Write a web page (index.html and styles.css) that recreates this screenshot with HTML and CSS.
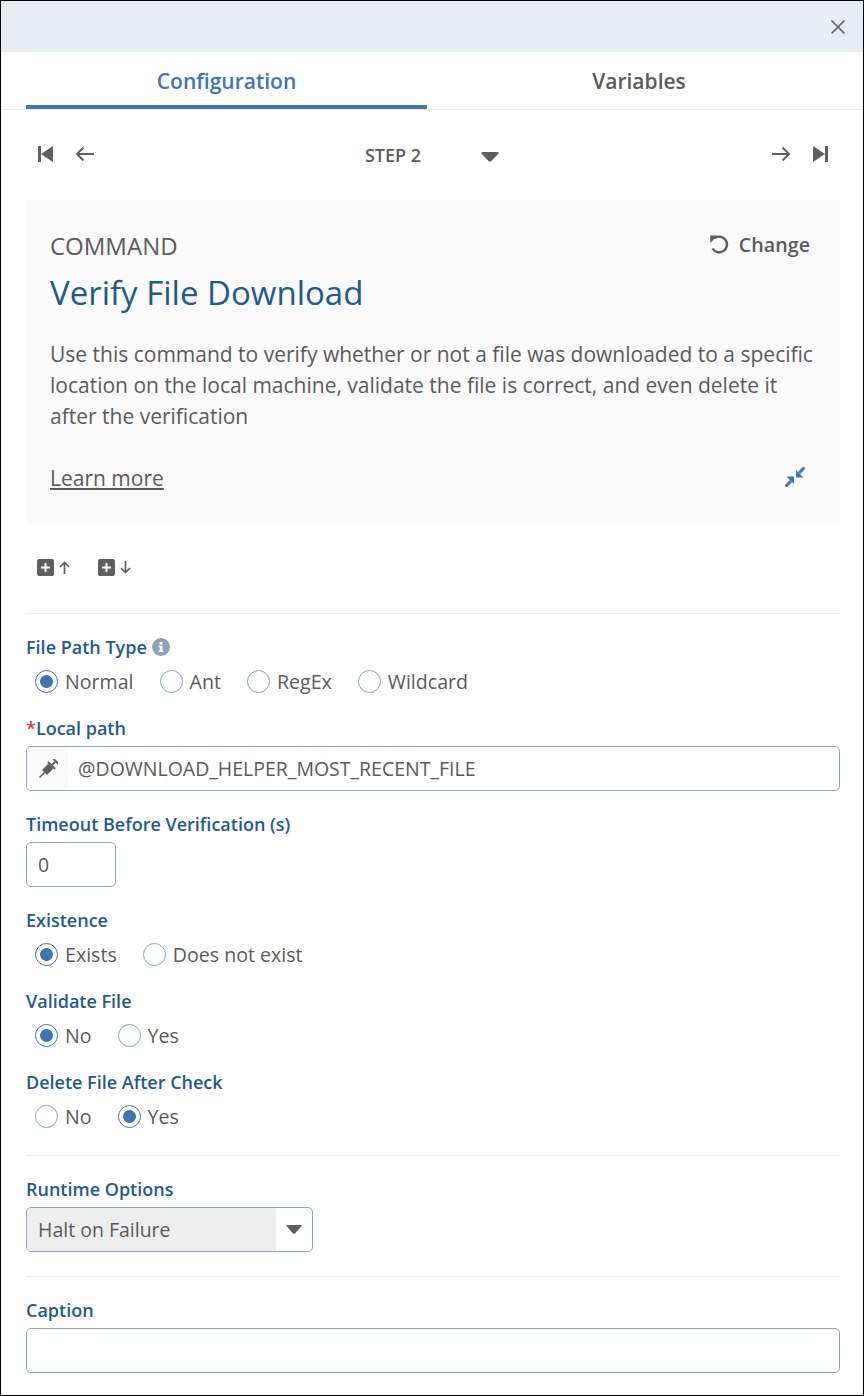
FILE: index.html
```html
<!DOCTYPE html>
<html lang="en">
<head>
  <meta charset="UTF-8" />
  <meta name="viewport" content="width=device-width, initial-scale=1.0" />
  <title>Verify File Download</title>
  <link rel="stylesheet" href="styles.css">
</head>
<body>
  <div class="panel">
    <div class="top-bar">
      <svg class="close-icon" width="16" height="16" viewBox="0 0 16 16"><path d="M1.5 1.5L14.5 14.5M14.5 1.5L1.5 14.5" /></svg>
    </div>

    <div class="tabs">
      <div class="tab active">Configuration</div>
      <div class="tab">Variables</div>
    </div>

    <div class="step-nav">
      <div class="step-group">
        <svg width="15" height="16" viewBox="0 0 15 16"><path class="fill" d="M0 0H3V16H0ZM15 0V16L3 8Z" /></svg>
        <svg class="arrow" width="19" height="16" viewBox="0 0 19 16"><path d="M19 8H2M8.500 1.500L2 8L8.500 14.500" /></svg>
      </div>
      <div class="step-select">
        <span>STEP 2</span>
        <svg class="step-caret" width="18" height="10" viewBox="0 0 18 10"><path class="fill" d="M1.500 0H16.500Q18 0 17.500 1.500L10.500 9Q9 10 7.500 9L.5 1.500Q0 0 1.500 0Z" /></svg>
      </div>
      <div class="step-group">
        <svg class="arrow" width="19" height="16" viewBox="0 0 19 16"><path d="M0 8H17M10.500 1.500L17 8L10.500 14.500" /></svg>
        <svg width="15" height="16" viewBox="0 0 15 16"><path class="fill" d="M15 0H12V16H15ZM0 0V16L12 8Z" /></svg>
      </div>
    </div>

    <div class="command-card">
      <div class="card-head">
        <span class="card-kicker">COMMAND</span>
        <span class="change-link">
          <svg width="20" height="20" viewBox="0 0 20 20"><path class="line" d="M5.500 4.200A7.800 7.800 0 1 1 3.500 14.500" /><path class="fill" d="M1 1.500L8.500 1.500L1.500 9Z" /></svg>
          Change
        </span>
      </div>
      <h1>Verify File Download</h1>
      <p>Use this command to verify whether or not a file was downloaded to a specific location on the local machine, validate the file is correct, and even delete it after the verification</p>
      <div class="card-foot">
        <a class="learn-more">Learn more</a>
        <svg class="collapse" width="20" height="20" viewBox="0 0 20 20"><path d="M19.500 .500L14 6M.5 19.500L6 14" /><path class="solid" d="M11 3V10.500H18.500ZM9 17V9.500H1.500Z" /></svg>
      </div>
    </div>

    <div class="insert-row">
      <span class="insert-btn">
        <svg width="17" height="17" viewBox="0 0 17 17"><rect class="fill" width="17" height="17" rx="2" /><path class="plus" d="M8.500 4V13M4 8.500H13" /></svg>
        <svg class="small-arrow" width="11" height="13" viewBox="0 0 11 13"><path d="M5.500 13V1.500M1 6L5.500 1.500L10 6" /></svg>
      </span>
      <span class="insert-btn">
        <svg width="17" height="17" viewBox="0 0 17 17"><rect class="fill" width="17" height="17" rx="2" /><path class="plus" d="M8.500 4V13M4 8.500H13" /></svg>
        <svg class="small-arrow" width="11" height="13" viewBox="0 0 11 13"><path d="M5.500 0V11.500M1 7L5.500 11.500L10 7" /></svg>
      </span>
    </div>

    <hr class="rule first-rule">

    <label class="field-label with-info">File Path Type
      <svg width="18" height="18" viewBox="0 0 18 18"><circle cx="9" cy="9" r="9" fill="#8fa3b8" /><path d="M7.500 4h3v2.500h-3zM6.800 7.800h3.700v4.700h1v1.500h-4.700v-1.500h1v-3.200h-1z" fill="#fff" /></svg>
    </label>
    <div class="radio-row">
      <span class="radio checked">Normal</span>
      <span class="radio">Ant</span>
      <span class="radio">RegEx</span>
      <span class="radio">Wildcard</span>
    </div>

    <label class="field-label"><span class="required">*</span>Local path</label>
    <div class="text-box path-box">
      <span class="box-icon">
        <svg width="20" height="20" viewBox="0 0 20 20"><g class="fill" transform="rotate(45 10 10)"><rect x="6" y="-2" width="8" height="2" /><rect x="9" y="0" width="2" height="4" /><rect x="5" y="4" width="10" height="2" /><rect x="6.500" y="6" width="7" height="9" /><rect x="9.200" y="15" width="1.600" height="7" /></g></svg>
      </span>
      <span class="box-value">@DOWNLOAD_HELPER_MOST_RECENT_FILE</span>
    </div>

    <label class="field-label">Timeout Before Verification (s)</label>
    <div class="text-box number-box"><span class="box-value">0</span></div>

    <label class="field-label">Existence</label>
    <div class="radio-row">
      <span class="radio checked">Exists</span>
      <span class="radio">Does not exist</span>
    </div>

    <label class="field-label">Validate File</label>
    <div class="radio-row">
      <span class="radio checked">No</span>
      <span class="radio">Yes</span>
    </div>

    <label class="field-label">Delete File After Check</label>
    <div class="radio-row">
      <span class="radio">No</span>
      <span class="radio checked">Yes</span>
    </div>

    <hr class="rule runtime-rule">

    <label class="field-label">Runtime Options</label>
    <div class="text-box select-box">
      <span class="select-value">Halt on Failure</span>
      <span class="select-caret">
        <svg width="16" height="9" viewBox="0 0 16 9"><path class="fill" d="M1 0H15Q16 0 15.500 1L9 8.500Q8 9 7 8.500L.5 1Q0 0 1 0Z" /></svg>
      </span>
    </div>

    <hr class="rule caption-rule">

    <label class="field-label">Caption</label>
    <div class="text-box caption-box"></div>
  </div>
</body>
</html>
```

FILE: styles.css
```css
* {
  box-sizing: border-box;
}
body {
  margin: 0;
  font-family: 'Open Sans', sans-serif;
  color: #5a5a5a;
  background: #fff;
}
svg {
  display: block;
  flex: none;
}
.fill {
  fill: #5f5f5f;
}
.line {
  fill: none;
  stroke: #5f5f5f;
  stroke-width: 2.400;
}
.panel {
  width: 864px;
  height: 1396px;
  border: 1px solid #000;
  overflow: hidden;
}
.top-bar {
  height: 51px;
  background: #e8edf4;
  display: flex;
  align-items: center;
  justify-content: flex-end;
  padding: 0 17px 0 0;
}
.close-icon path {
  fill: none;
  stroke: #5f5f5f;
  stroke-width: 1.700;
}
.tabs {
  height: 58px;
  padding: 0 23px 0 25px;
  border-bottom: 1px solid #ececec;
  display: grid;
  grid-template-columns: 401px 402px;
  gap: 11px;
}
.tab {
  height: 57px;
  padding-top: 14px;
  text-align: center;
  font-size: 21px;
  line-height: 30px;
  font-weight: 600;
}
.tab.active {
  color: #3d74b4;
  border-bottom: 4px solid #3d74b4;
}
.step-nav {
  height: 90px;
  padding: 0 35px 0 37px;
  display: flex;
  align-items: center;
  justify-content: space-between;
}
.step-group {
  display: flex;
  align-items: center;
  gap: 22px;
  padding-bottom: 2px;
}
.arrow path, .small-arrow path {
  fill: none;
  stroke: #5f5f5f;
  stroke-width: 2;
}
.step-select {
  display: flex;
  align-items: center;
  gap: 60px;
  font-size: 18px;
  font-weight: 600;
  margin-right: 2px;
}
.step-caret {
  margin-top: 4px;
}
.command-card {
  margin: 0 23px 0 25px;
  height: 323px;
  background: #fafafa;
  padding: 30px 24px 0 24px;
}
.card-head {
  display: flex;
  justify-content: space-between;
  align-items: center;
  height: 30px;
  padding-right: 6px;
}
.card-kicker {
  font-size: 24px;
}
.change-link {
  display: flex;
  align-items: center;
  gap: 10px;
  font-size: 19.700px;
  font-weight: 600;
  margin-bottom: 2px;
}
.command-card h1 {
  margin: 11px 0 0;
  font-size: 33px;
  line-height: 44px;
  font-weight: 400;
  color: #235a8c;
}
.command-card p {
  margin: 24px 0 0;
  font-size: 21px;
  line-height: 31px;
}
.card-foot {
  margin-top: 31px;
  padding-right: 11px;
  display: flex;
  justify-content: space-between;
  align-items: center;
}
.learn-more {
  font-size: 21px;
  line-height: 31px;
  text-decoration: underline;
}
.collapse {
  margin-bottom: 4px;
}
.collapse path {
  fill: none;
  stroke: #3d74b4;
  stroke-width: 3;
}
.collapse .solid {
  fill: #3d74b4;
  stroke: none;
}
.insert-row {
  margin: 35px 0 0 36px;
  display: flex;
  gap: 28px;
  height: 18px;
}
.insert-btn {
  display: flex;
  align-items: center;
  gap: 5px;
}
.plus {
  fill: none;
  stroke: #fff;
  stroke-width: 2;
}
.small-arrow path {
  stroke-width: 1.700;
}
.rule {
  margin: 0 23px 0 25px;
  border: 0;
  border-top: 1px solid #ececec;
}
.first-rule {
  margin-top: 37px;
  margin-bottom: 21px;
}
.runtime-rule {
  margin-top: 26px;
  margin-bottom: 21px;
}
.caption-rule {
  margin-top: 24px;
  margin-bottom: 21px;
}
.field-label {
  display: flex;
  align-items: center;
  gap: 5px;
  height: 24px;
  margin: 0 25px;
  font-size: 18px;
  font-weight: 600;
  color: #235a8c;
}
.required {
  color: #d9363e;
  margin-right: -5px;
}
.radio-row {
  margin: 9px 25px 22px 34px;
  display: flex;
  gap: 26px;
  height: 26px;
  align-items: center;
}
.radio {
  display: flex;
  align-items: center;
  gap: 7px;
  font-size: 19.600px;
}
.radio::before {
  content: "";
  width: 21px;
  height: 21px;
  border-radius: 50%;
  border: 1.500px solid #8fa3b8;
  background: #fff;
}
.radio.checked::before {
  border-color: #3d74b4;
  background: radial-gradient(circle, #3d74b4 0 6px, #fff 6.800px);
}
.text-box {
  margin: 6px 23px 0 25px;
  height: 45px;
  border: 1px solid #8fa3b8;
  border-radius: 5px;
  display: flex;
  align-items: center;
  font-size: 19.500px;
  overflow: hidden;
}
.path-box {
  margin-bottom: 21px;
}
.path-box .box-value {
  padding-left: 10px;
}
.box-icon {
  width: 41px;
  height: 100%;
  background: #fafafa;
  display: flex;
  align-items: center;
  justify-content: center;
}
.box-value {
  padding-left: 11px;
}
.number-box {
  width: 90px;
  margin-bottom: 21px;
}
.select-box {
  width: 287px;
}
.select-value {
  width: 249px;
  height: 100%;
  background: #eee;
  padding-left: 11px;
  line-height: 43px;
}
.select-caret {
  flex: 1;
  display: flex;
  justify-content: center;
}
```
